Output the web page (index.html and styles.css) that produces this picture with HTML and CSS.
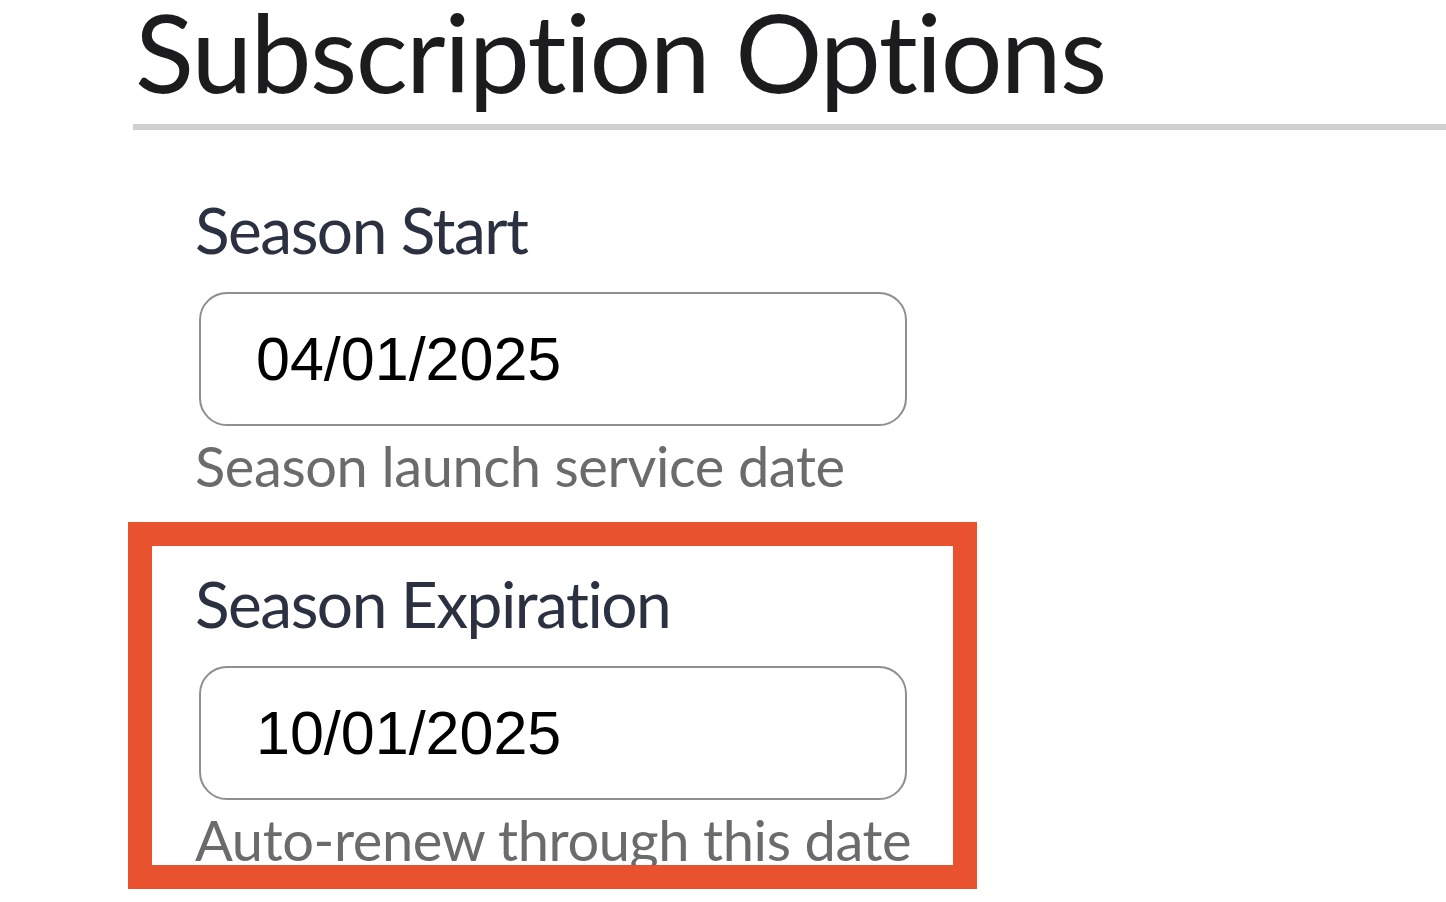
FILE: index.html
```html
<!DOCTYPE html>
<html lang="en">
<head>
<meta charset="utf-8">
<title>Subscription Options</title>
<link rel="stylesheet" href="styles.css">
</head>
<body>
<main class="page">
  <h1 class="title">Subscription Options</h1>
  <div class="rule"></div>
  <section class="fields">
    <div class="field">
      <label class="label" for="start">Season Start</label>
      <div class="input" id="start">04/01/2025</div>
      <p class="help">Season launch service date</p>
    </div>
    <div class="field">
      <label class="label" for="exp">Season Expiration</label>
      <div class="input" id="exp">10/01/2025</div>
      <p class="help">Auto-renew through this date</p>
    </div>
  </section>
  <div class="highlight"></div>
</main>
</body>
</html>
```

FILE: styles.css
```css
html, body {
  margin: 0;
  padding: 0;
  background: #ffffff;
  overflow: hidden;
}
body {
  width: 1446px;
  height: 902px;
  font-family: "Lato", "Liberation Sans", sans-serif;
  font-variant-ligatures: none;
}
.page {
  position: relative;
  padding-left: 133px;
  height: 902px;
  box-sizing: border-box;
}
.title {
  margin: 0;
  padding-left: 2px;
  font-size: 109px;
  line-height: 0.932;
  font-weight: 400;
  color: #1c1c1e;
  letter-spacing: -1.6px;
}
.rule {
  margin-top: 22px;
  height: 6px;
  background: #d0d0d0;
}
.fields {
  display: flex;
  flex-direction: column;
  gap: 78px;
  padding-left: 62px;
  margin-top: 68px;
}
.field {
  display: flex;
  flex-direction: column;
  align-items: flex-start;
}
.label {
  font-size: 64px;
  line-height: 1;
  color: #2c3142;
  letter-spacing: -1.5px;
}
.input {
  margin-top: 30px;
  margin-left: 4px;
  width: 708px;
  height: 134px;
  box-sizing: border-box;
  border: 2px solid #8e8e93;
  border-radius: 28px;
  padding-left: 55px;
  display: flex;
  align-items: center;
  font-family: "Liberation Sans", Arial, sans-serif;
  font-size: 61px;
  color: #000000;
}
.help {
  margin: 12px 0 0 0;
  font-size: 56px;
  line-height: 1;
  color: #6b6b6e;
  letter-spacing: -0.4px;
}
.highlight {
  position: absolute;
  left: 128px;
  top: 522px;
  width: 849px;
  height: 367px;
  box-sizing: border-box;
  border: 24px solid #e8522f;
}
```
